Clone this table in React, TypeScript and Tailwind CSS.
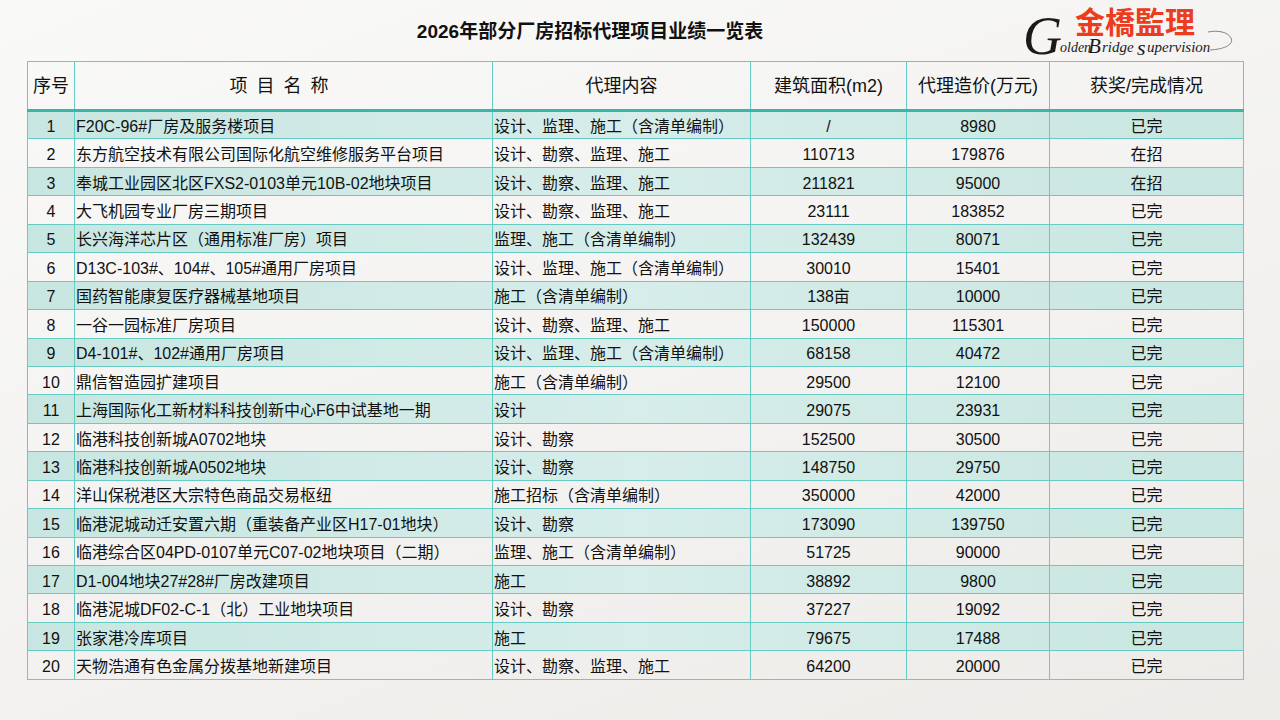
const rows: [string, string, string, string, string, string][] = [
  ['1', 'F20C-96#厂房及服务楼项目', '设计、监理、施工（含清单编制）', '/', '8980', '已完'],
  ['2', '东方航空技术有限公司国际化航空维修服务平台项目', '设计、勘察、监理、施工', '110713', '179876', '在招'],
  ['3', '奉城工业园区北区FXS2-0103单元10B-02地块项目', '设计、勘察、监理、施工', '211821', '95000', '在招'],
  ['4', '大飞机园专业厂房三期项目', '设计、勘察、监理、施工', '23111', '183852', '已完'],
  ['5', '长兴海洋芯片区（通用标准厂房）项目', '监理、施工（含清单编制）', '132439', '80071', '已完'],
  ['6', 'D13C-103#、104#、105#通用厂房项目', '设计、监理、施工（含清单编制）', '30010', '15401', '已完'],
  ['7', '国药智能康复医疗器械基地项目', '施工（含清单编制）', '138亩', '10000', '已完'],
  ['8', '一谷一园标准厂房项目', '设计、勘察、监理、施工', '150000', '115301', '已完'],
  ['9', 'D4-101#、102#通用厂房项目', '设计、监理、施工（含清单编制）', '68158', '40472', '已完'],
  ['10', '鼎信智造园扩建项目', '施工（含清单编制）', '29500', '12100', '已完'],
  ['11', '上海国际化工新材料科技创新中心F6中试基地一期', '设计', '29075', '23931', '已完'],
  ['12', '临港科技创新城A0702地块', '设计、勘察', '152500', '30500', '已完'],
  ['13', '临港科技创新城A0502地块', '设计、勘察', '148750', '29750', '已完'],
  ['14', '洋山保税港区大宗特色商品交易枢纽', '施工招标（含清单编制）', '350000', '42000', '已完'],
  ['15', '临港泥城动迁安置六期（重装备产业区H17-01地块）', '设计、勘察', '173090', '139750', '已完'],
  ['16', '临港综合区04PD-0107单元C07-02地块项目（二期）', '监理、施工（含清单编制）', '51725', '90000', '已完'],
  ['17', 'D1-004地块27#28#厂房改建项目', '施工', '38892', '9800', '已完'],
  ['18', '临港泥城DF02-C-1（北）工业地块项目', '设计、勘察', '37227', '19092', '已完'],
  ['19', '张家港冷库项目', '施工', '79675', '17488', '已完'],
  ['20', '天物浩通有色金属分拨基地新建项目', '设计、勘察、监理、施工', '64200', '20000', '已完'],
];

const serif = "'Liberation Serif', serif";

function Logo() {
  return (
    <svg width="215" height="60" viewBox="0 0 215 60">
      <text x="55" y="33" fill="#ec3b1d" fontSize="30" fontWeight="700" fontFamily="'Noto Sans CJK TC', 'Noto Sans CJK SC', sans-serif">
        金橋監理
      </text>
      <text x="3" y="54" fill="#1a1a1a" fontSize="54" fontStyle="italic" fontFamily={serif}>
        G
      </text>
      <text x="40" y="52" fill="#1a1a1a" fontSize="14" fontStyle="italic" fontFamily={serif}>
        olden
      </text>
      <text x="68" y="53" fill="#1a1a1a" fontSize="21" fontStyle="italic" fontFamily={serif}>
        B
      </text>
      <text x="82" y="52" fill="#1a1a1a" fontSize="15" fontStyle="italic" fontFamily={serif}>
        ridge
      </text>
      <text x="117" y="55" fill="#1a1a1a" fontSize="22" fontStyle="italic" fontFamily={serif}>
        s
      </text>
      <text x="127" y="52" fill="#1a1a1a" fontSize="15" fontStyle="italic" fontFamily={serif}>
        upervision
      </text>
      <path d="M190 50 C 206 49, 214 44, 211 38 C 208 32, 198 30, 188 32" fill="none" stroke="#777" strokeWidth="0.9" />
    </svg>
  );
}

const th = 'border border-[#66ccc3] border-b-[3px] border-b-[#3db4a8] font-normal pt-[2px]';
const td = 'border border-[#66ccc3] pt-[4px]';

export default function App() {
  return (
    <div className="w-[1280px] h-[720px] overflow-hidden bg-[linear-gradient(160deg,#f9f9f8_0%,#f3f2f0_55%,#ecebe8_100%)] font-['Liberation_Sans','Noto_Sans_CJK_SC',sans-serif] text-[#111]">
      <div className="flex h-[61px]">
        <div className="w-[1018px] pl-[162px] pt-[20px] text-center text-[19px] font-bold leading-[24px]">
          2026年部分厂房招标代理项目业绩一览表
        </div>
        <div className="ml-[2px]">
          <Logo />
        </div>
      </div>
      <div className="pl-[27px]">
        <table className="w-[1216px] table-fixed border-collapse">
          <colgroup>
            <col className="w-[47px]" />
            <col className="w-[418px]" />
            <col className="w-[258px]" />
            <col className="w-[156px]" />
            <col className="w-[143px]" />
            <col className="w-[194px]" />
          </colgroup>
          <thead>
            <tr className="h-[49px] text-[18px]">
              <th className={th}>序号</th>
              <th className={th + ' tracking-[0.5em]'}>项目名称</th>
              <th className={th}>代理内容</th>
              <th className={th}>建筑面积(m2)</th>
              <th className={th}>代理造价(万元)</th>
              <th className={th}>获奖/完成情况</th>
            </tr>
          </thead>
          <tbody>
            {rows.map((r, i) => (
              <tr
                key={r[0]}
                className={
                  i % 2 === 0
                    ? 'h-[28.45px] text-[16px] leading-[20px] bg-[linear-gradient(90deg,#c8e6e1_0%,#d6edea_50%,#c9e6e0_100%)]'
                    : 'h-[28.45px] text-[16px] leading-[20px]'
                }
              >
                <td className={td + ' text-center'}>{r[0]}</td>
                <td className={td + ' pl-[1px] whitespace-nowrap overflow-hidden'}>{r[1]}</td>
                <td className={td + ' pl-[1px] whitespace-nowrap overflow-hidden'}>{r[2]}</td>
                <td className={td + ' text-center'}>{r[3]}</td>
                <td className={td + ' text-center'}>{r[4]}</td>
                <td className={td + ' text-center'}>{r[5]}</td>
              </tr>
            ))}
          </tbody>
        </table>
      </div>
    </div>
  );
}
